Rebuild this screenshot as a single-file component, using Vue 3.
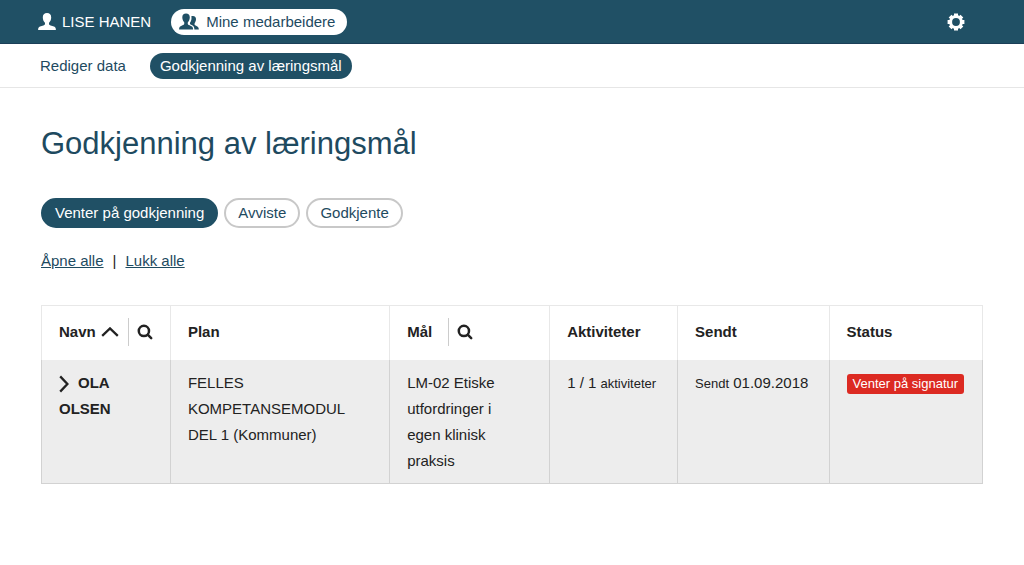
<script setup>
import { ref } from 'vue'

const filters = ['Venter på godkjenning', 'Avviste', 'Godkjente']
const activeFilter = ref(filters[0])

const rows = [
  {
    name: 'OLA OLSEN',
    plan: 'FELLES KOMPETANSEMODUL DEL 1 (Kommuner)',
    goal: 'LM-02 Etiske utfordringer i egen klinisk praksis',
    activities: '1 / 1',
    sent: '01.09.2018',
    status: 'Venter på signatur',
  },
]
</script>

<template>
  <div class="page">
    <header class="topbar">
      <a class="user" href="#">
        <svg class="user-icon" viewBox="0 0 18 17" aria-hidden="true">
          <path d="M9 0C6.3 0 4.7 1.8 4.8 4.4C4.9 6.5 5.6 8.3 6.8 9.4C7.4 11 6.9 11.9 5.4 12.4L2 13.6C.6 14.1.2 15 .1 17H17.9C17.8 15 17.4 14.1 16 13.6L12.6 12.4C11.1 11.9 10.6 11 11.2 9.4C12.4 8.3 13.1 6.5 13.2 4.4C13.3 1.8 11.7 0 9 0Z" />
        </svg>
        <span>LISE HANEN</span>
      </a>
      <a class="staff" href="#">
        <svg class="staff-icon" viewBox="0 0 20 17" aria-hidden="true">
          <path d="M7 .5C4.7.5 3.2 2 3.3 4.4C3.4 6.3 4 7.9 5.1 9C5.6 10.6 5.2 11.6 4 12.1L1.6 13.2C.4 13.8.1 14.8.1 16.5H14.1C14.1 14.8 13.7 13.8 12.5 13.2L10 12.1C8.8 11.6 8.4 10.6 9 9C10.1 7.9 10.7 6.3 10.8 4.4C10.9 2 9.4.5 7 .5Z" />
          <path d="M12.3 3.2C15.2 2.2 17.2 3.8 17 6.3C16.9 8 16.5 9 15.7 9.9C15.3 11.2 15.6 12.1 16.7 12.6L18.3 13.4C19.4 14 19.8 14.8 19.8 16.5H15.4C15.4 14.3 14.7 13 13.2 12.3L11.5 11.4C10.9 11 10.8 10.4 11.1 9.6C12.4 7.9 12.9 5.2 12.3 3.2Z" />
        </svg>
        <span>Mine medarbeidere</span>
      </a>
      <button class="settings" type="button" aria-label="Innstillinger">
        <svg viewBox="0 0 18 18" aria-hidden="true">
          <g class="teeth">
            <path d="M9 .6V4M9 14V17.4M.6 9H4M14 9H17.4M3.1 3.1L5.4 5.4M12.6 12.6L14.9 14.9M3.1 14.9L5.4 12.6M12.6 5.4L14.9 3.1" />
          </g>
          <circle class="ring" cx="9" cy="9" r="5.4" />
        </svg>
      </button>
    </header>

    <nav class="subnav">
      <a href="#">Rediger data</a>
      <a class="current" href="#" aria-current="page">Godkjenning av læringsmål</a>
    </nav>

    <main>
      <h1>Godkjenning av læringsmål</h1>

      <div class="filters">
        <button
          v-for="filter in filters"
          :key="filter"
          type="button"
          :class="{ active: filter === activeFilter }"
          :aria-pressed="filter === activeFilter"
          @click="activeFilter = filter"
        >{{ filter }}</button>
      </div>

      <div class="toggles">
        <a href="#">Åpne alle</a>
        <span>|</span>
        <a href="#">Lukk alle</a>
      </div>

      <table>
        <colgroup>
          <col class="c-name" />
          <col class="c-plan" />
          <col class="c-goal" />
          <col class="c-act" />
          <col class="c-sent" />
          <col class="c-status" />
        </colgroup>
        <thead>
          <tr>
            <th scope="col">
              <div class="head">
                <button class="sort" type="button">
                  <span>Navn</span>
                  <svg class="caret" viewBox="0 0 18 10" aria-hidden="true"><path d="M1.2 8.8L9 1.4L16.8 8.8" /></svg>
                </button>
                <button class="search" type="button" aria-label="Søk i navn">
                  <svg viewBox="0 0 16 16" aria-hidden="true"><circle cx="6.9" cy="6.9" r="5.1" /><path d="M10.7 10.7L14.2 14.2" /></svg>
                </button>
              </div>
            </th>
            <th scope="col">Plan</th>
            <th scope="col">
              <div class="head">
                <span class="label">Mål</span>
                <button class="search" type="button" aria-label="Søk i mål">
                  <svg viewBox="0 0 16 16" aria-hidden="true"><circle cx="6.9" cy="6.9" r="5.1" /><path d="M10.7 10.7L14.2 14.2" /></svg>
                </button>
              </div>
            </th>
            <th scope="col">Aktiviteter</th>
            <th scope="col">Sendt</th>
            <th scope="col">Status</th>
          </tr>
        </thead>
        <tbody>
          <tr v-for="row in rows" :key="row.name">
            <td class="name">
              <button class="expand" type="button" :aria-label="'Åpne ' + row.name">
                <svg viewBox="0 0 10 18" aria-hidden="true"><path d="M1.2 1.4L8.4 9L1.2 16.6" /></svg>
              </button>{{ row.name }}
            </td>
            <td>{{ row.plan }}</td>
            <td class="goal">{{ row.goal }}</td>
            <td class="nowrap">{{ row.activities }} <small>aktiviteter</small></td>
            <td class="nowrap"><small>Sendt</small> {{ row.sent }}</td>
            <td class="nowrap"><span class="badge">{{ row.status }}</span></td>
          </tr>
        </tbody>
      </table>
    </main>
  </div>
</template>

<style>
body {
  margin: 0;
  background: #fff;
}
</style>

<style scoped>
.page {
  font-family: "Liberation Sans", Arial, sans-serif;
  font-size: 15px;
  line-height: 26px;
  color: #222;
}

a {
  color: #1e4a5f;
  text-decoration: none;
}

button {
  font: inherit;
  color: inherit;
  background: none;
  border: 0;
  margin: 0;
  padding: 0;
  cursor: pointer;
}

svg {
  display: block;
}

.topbar {
  display: flex;
  align-items: center;
  height: 44px;
  padding: 0 59px 0 38px;
  background: #205065;
  border-bottom: 1px solid #1b3f58;
  box-sizing: border-box;
}

.user {
  display: flex;
  align-items: center;
  gap: 6px;
  margin-right: 20px;
  color: #fff;
}

.user-icon {
  width: 18px;
  height: 17px;
  fill: #fff;
}

.staff {
  display: flex;
  align-items: center;
  gap: 7px;
  padding: 0 12px 0 8px;
  background: #fff;
  border-radius: 13px;
}

.staff-icon {
  width: 20px;
  height: 17px;
  fill: #205065;
}

.settings {
  margin-left: auto;
}

.settings svg {
  width: 18px;
  height: 18px;
  fill: none;
  stroke: #fff;
}

.teeth {
  stroke-width: 4;
}

.ring {
  stroke-width: 3;
}

.subnav {
  display: flex;
  align-items: center;
  gap: 24px;
  height: 44px;
  padding: 0 40px;
  border-bottom: 1px solid #e6e6e6;
  box-sizing: border-box;
}

.subnav .current {
  padding: 0 10px;
  color: #fff;
  background: #205065;
  border-radius: 13px;
}

main {
  padding: 37px 41px;
}

h1 {
  margin: 0;
  font-size: 31px;
  line-height: 38px;
  font-weight: 400;
  color: #1e4a5f;
}

.filters {
  display: flex;
  gap: 6px;
  margin-top: 35px;
}

.filters button {
  padding: 0 12px;
  border: 2px solid #c8c8c8;
  border-radius: 15px;
  color: #1e4a5f;
}

.filters .active {
  color: #fff;
  background: #205065;
  border-color: #205065;
}

.toggles {
  display: flex;
  gap: 9px;
  margin-top: 20px;
}

.toggles a {
  text-decoration: underline;
}

table {
  width: 100%;
  margin-top: 31px;
  table-layout: fixed;
  border-collapse: collapse;
}

.c-name { width: 13.7%; }
.c-plan { width: 23.3%; }
.c-goal { width: 17%; }
.c-act { width: 13.6%; }
.c-sent { width: 16.1%; }
.c-status { width: 16.3%; }

th {
  height: 54px;
  padding: 0 17px 2px;
  border: 1px solid #e8e8e8;
  border-bottom: 0;
  text-align: left;
  vertical-align: middle;
  box-sizing: border-box;
}

td {
  padding: 10px 17px 9px;
  background: #ededed;
  border: 1px solid #d2d2d2;
  border-top: 0;
  vertical-align: top;
}

.head {
  display: flex;
  align-items: center;
}

.sort {
  display: flex;
  align-items: center;
  gap: 5px;
  margin-right: 9px;
  font-weight: 700;
}

.caret {
  width: 18px;
  height: 10px;
  fill: none;
  stroke: #222;
  stroke-width: 2.3;
}

.label {
  margin-right: 16px;
}

.search {
  display: flex;
  align-items: center;
  height: 28px;
  padding-left: 8px;
  border-left: 1px solid #ccc;
}

.search svg {
  width: 16px;
  height: 16px;
  fill: none;
  stroke: #222;
  stroke-width: 2.5;
  stroke-linecap: round;
}

.name {
  font-weight: 700;
}

.goal {
  padding-right: 32px;
}

.expand {
  display: inline-block;
  margin-right: 9px;
  vertical-align: middle;
}

.expand svg {
  width: 10px;
  height: 18px;
  fill: none;
  stroke: #222;
  stroke-width: 2.3;
}

.nowrap {
  white-space: nowrap;
}

small {
  font-size: 13px;
}

.badge {
  display: inline-block;
  padding: 0 6px;
  font-size: 13px;
  line-height: 20px;
  color: #fff;
  background: #dc2a22;
  border-radius: 3px;
}
</style>
